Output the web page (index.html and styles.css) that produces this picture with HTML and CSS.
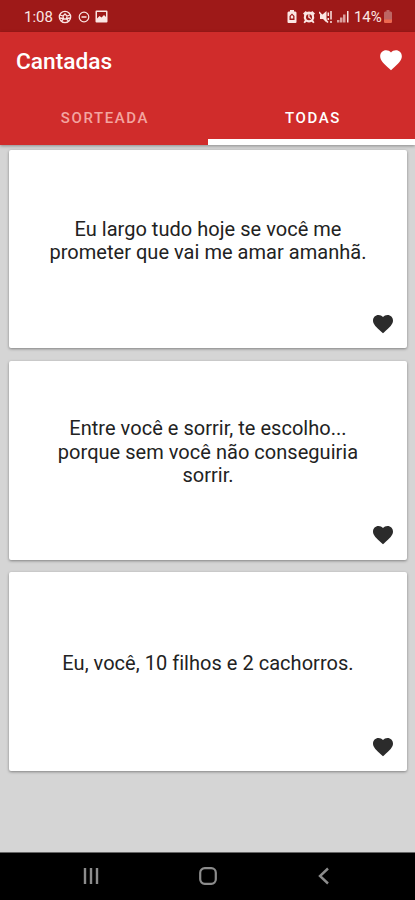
FILE: index.html
```html
<!DOCTYPE html>
<html lang="pt-BR">
<head>
<meta charset="utf-8">
<title>Cantadas</title>
<meta name="viewport" content="width=device-width, initial-scale=1">
<link rel="stylesheet" href="styles.css">
</head>
<body>
<svg class="defs" width="0" height="0" aria-hidden="true">
  <symbol id="heart" viewBox="0 0 24 24"><path d="M12 21.35l-1.45-1.32C5.4 15.36 2 12.28 2 8.5 2 5.42 4.42 3 7.5 3c1.74 0 3.41.81 4.5 2.09C13.09 3.81 14.76 3 16.5 3 19.58 3 22 5.42 22 8.5c0 3.78-3.4 6.86-8.55 11.54z"/></symbol>
</svg>
<div class="screen">
  <div class="status">
    <div class="status-left">
      <span class="clock">1:08</span>
      <svg class="ball" width="14" height="14" viewBox="0 0 14 14" fill="none" stroke="currentColor" stroke-width="1.3"><circle cx="7" cy="7" r="5.7"/><path d="M2 5l3 1 2-2 2 2 3-1M5 6l.5 3h3L9 6M5.500 9L3.500 11M8.500 9l2 2M1.500 8L5 8.500M9 8.500l3.500-.5"/></svg>
      <svg class="dnd" width="12" height="12" viewBox="0 0 12 12" fill="none" stroke="currentColor"><circle cx="6" cy="6" r="4.800" stroke-width="1.200"/><path d="M3.500 6h5" stroke-width="1.500"/></svg>
      <svg class="photo" width="13" height="13" viewBox="0 0 13 13"><path fill="currentColor" fill-rule="evenodd" d="M1.500.5h10a1 1 0 0 1 1 1v10a1 1 0 0 1-1 1h-10a1 1 0 0 1-1-1v-10a1 1 0 0 1 1-1zM2 2v6.500L4.500 6l2 1.500L9 5l2 2V2z"/></svg>
    </div>
    <div class="status-right">
      <svg width="10" height="13" viewBox="0 0 10 13"><path fill="currentColor" fill-rule="evenodd" d="M3 0h4v1.500h1.500l1 1V12a1 1 0 0 1-1 1h-7a1 1 0 0 1-1-1V2.500l1-1H3zM5 3.500L2.500 6v4h5V6zM5 5l1.200 1.300v2.200H3.800V6.300z"/></svg>
      <svg class="alarm" width="14" height="14" viewBox="0 0 14 14"><path fill="currentColor" fill-rule="evenodd" d="M1 3.500L3.800 1l1 1Q7 1.200 9.200 2l1-1L13 3.500l-1.200 1.300q1.200 3.300-.6 5.700l1.300 1.700-1.300 1-1.500-1.500Q7 13.200 4.300 11.700l-1.500 1.500-1.300-1 1.300-1.700Q1 8.100 2.200 4.800zM7 4.200a3 3 0 1 0 0 6 3 3 0 0 0 0-6zM6.200 4.600h1.400v2.300l1.600 1-.6 1-2.400-1.400z"/></svg>
      <svg class="mute" width="14" height="14" viewBox="0 0 14 14"><path fill="currentColor" d="M1 4.500h2.500L7.500 1v11.500L4 9H1z"/><path d="M0 2l9 10.500M9.300 2.500v3.500M9.300 8v2M12 1v8.500M12 11v2" stroke="currentColor" stroke-width="1.500"/></svg>
      <svg class="signal" width="12" height="13" viewBox="0 0 12 13"><path fill="currentColor" opacity=".65" d="M0 10h2.500v2.500H0zM3 7.500h2.500v5H3zM6 4.500h2.500v8H6z"/><path fill="currentColor" d="M10 1h1.500v11.500H10z"/></svg>
      <span class="percent">14%</span>
      <svg class="battery" width="8" height="13" viewBox="0 0 8 13"><path fill="#bd6663" d="M2.500 0h3v1.500H7l1 1V12l-1 1H1l-1-1V2.500l1-1h1.500z"/><path fill="#ed6850" d="M0 9.500h8V12l-1 1H1l-1-1z"/></svg>
    </div>
  </div>
  <header class="appbar">
    <div class="toolbar">
      <h1 class="title">Cantadas</h1>
      <svg class="fav" width="26" height="26"><use href="#heart"/></svg>
    </div>
    <nav class="tabs">
      <div class="tab">SORTEADA</div>
      <div class="tab active">TODAS</div>
    </nav>
  </header>
  <main class="list">
    <article class="card">
      <p class="quote">Eu largo tudo hoje se você me<br>prometer que vai me amar amanhã.</p>
      <svg class="like" width="24" height="24"><use href="#heart"/></svg>
    </article>
    <article class="card">
      <p class="quote">Entre você e sorrir, te escolho...<br>porque sem você não conseguiria<br>sorrir.</p>
      <svg class="like" width="24" height="24"><use href="#heart"/></svg>
    </article>
    <article class="card">
      <p class="quote">Eu, você, 10 filhos e 2 cachorros.</p>
      <svg class="like" width="24" height="24"><use href="#heart"/></svg>
    </article>
  </main>
  <footer class="navbar">
    <svg width="18" height="18" viewBox="0 0 18 18"><path d="M3 1v16M9 1v16M15 1v16" stroke="currentColor" stroke-width="2.400"/></svg>
    <svg width="18" height="18" viewBox="0 0 18 18"><rect x="1.200" y="1.200" width="15.600" height="15.600" rx="4.500" fill="none" stroke="currentColor" stroke-width="2.200"/></svg>
    <svg width="18" height="18" viewBox="0 0 18 18"><path d="M13 1.500L5 9l8 7.500" fill="none" stroke="currentColor" stroke-width="2.400"/></svg>
  </footer>
</div>
</body>
</html>
```
FILE: styles.css
```css
* { box-sizing: border-box; }
body { margin: 0; font-family: Roboto, sans-serif; }
svg { display: block; flex: none; }
.defs { position: absolute; }
.screen {
  width: 415px;
  height: 900px;
  display: flex;
  flex-direction: column;
  background: #d5d5d5;
  overflow: hidden;
}
.status {
  height: 32px;
  flex: none;
  display: flex;
  justify-content: space-between;
  padding: 1px 23px 0 24px;
  background: #9e1918;
  color: #fbe6e3;
}
.status-left, .status-right { display: flex; align-items: center; }
.clock, .percent { font-size: 15px; line-height: 32px; }
.clock { width: 29px; }
.percent { width: 30px; white-space: nowrap; letter-spacing: -0.1px; }
.ball { margin-left: 5px; }
.dnd { margin-left: 6px; }
.photo { margin-left: 5px; }
.alarm { margin-left: 5px; }
.mute { margin-left: 3px; }
.signal { margin: 0 5px 0 4px; }
.appbar {
  height: 113px;
  flex: none;
  background: #d02c2b;
  box-shadow: 0 1px 3px rgba(0, 0, 0, 0.35);
  color: #fff;
}
.toolbar {
  height: 59px;
  display: flex;
  align-items: center;
  justify-content: space-between;
  padding: 0 11px 0 16px;
}
.title { margin: 0; font-size: 22.7px; font-weight: 500; line-height: 28px; }
.fav { fill: #fff; margin-bottom: 3px; }
.tabs {
  display: grid;
  grid-template-columns: 208px 1fr;
  grid-template-rows: 54px;
}
.tab {
  height: 54px;
  padding: 5px 0 0 2px;
  text-align: center;
  font-size: 15px;
  font-weight: 500;
  line-height: 44px;
  letter-spacing: 1.6px;
  color: #f3a5a0;
  border-bottom: 6px solid transparent;
}
.tab.active { padding-left: 3px; color: #fff; border-bottom-color: #fff; }
.list {
  flex: 1;
  display: flex;
  flex-direction: column;
  gap: 12.6px;
  padding: 4.5px 8px 0 9px;
}
.card {
  height: 198.8px;
  flex: none;
  display: flex;
  flex-direction: column;
  justify-content: space-between;
  background: #fff;
  border-radius: 2px;
  box-shadow: 0 1px 3px rgba(0, 0, 0, 0.4);
}
.quote {
  margin: 0;
  height: 162px;
  padding-top: 21px;
  display: grid;
  place-content: center;
  text-align: center;
  font-size: 20px;
  line-height: 23.5px;
  letter-spacing: 0.03px;
  color: #222;
  white-space: nowrap;
}
.like { align-self: flex-end; margin: 0 12px 12.5px 0; fill: #2b2b2b; }
.navbar {
  height: 48px;
  flex: none;
  display: flex;
  align-items: center;
  justify-content: space-between;
  padding: 0 82px 2px;
  background: #000;
  border-top: 1px solid #666;
  color: #8c8c8c;
}
```
